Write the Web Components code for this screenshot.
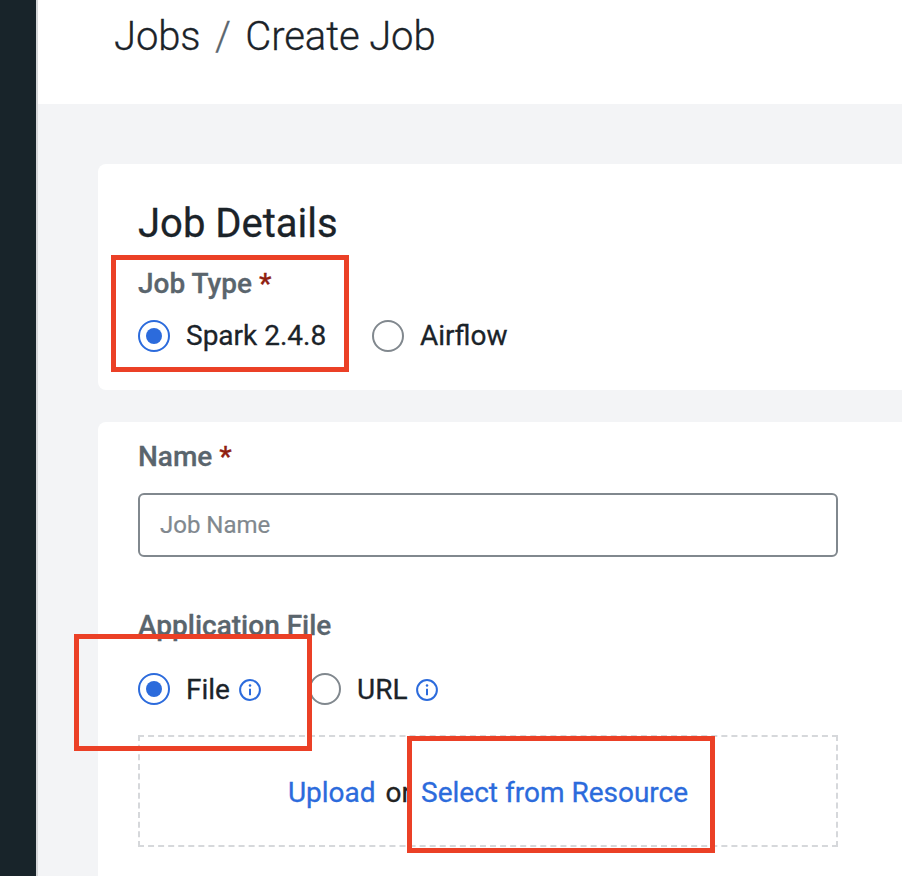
<!DOCTYPE html>
<html lang="en">
<head>
<meta charset="utf-8">
<title>Create Job</title>
<style>
html,body{margin:0;height:100%;overflow:hidden}
body{font-family:Roboto,"Liberation Sans",sans-serif;color:#1b2329;background:#f3f4f6;-webkit-text-stroke:.3px currentColor;
--blue:#2c6bdc;--grey:#5a656d;--line:#81888e;--required:#8f2011;--mark:#eb4026}
</style>
</head>
<body>
<job-page>
  <page-trail slot="header" parent="Jobs" current="Create Job"></page-trail>
  <form-card class="details" style="--h:226px;--pt:36px">
    <section-title>Job Details</section-title>
    <field-label required style="margin-top:20px">Job Type</field-label>
    <radio-row style="margin-top:20px;--gap:46px">
      <radio-option checked style="width:188px">Spark 2.4.8</radio-option>
      <radio-option>Airflow</radio-option>
    </radio-row>
  </form-card>
  <form-card style="--h:560px;--pt:19px">
    <field-label required>Name</field-label>
    <text-field placeholder="Job Name" style="margin-top:20px"></text-field>
    <field-label style="margin-top:53px">Application File</field-label>
    <radio-row style="margin-top:31px;--gap:48px;--drop:2px">
      <radio-option checked info style="width:123px">File</radio-option>
      <radio-option info style="--info-gap:8px">URL</radio-option>
    </radio-row>
    <drop-zone style="margin-top:30px"></drop-zone>
  </form-card>
  <mark-box slot="marks" style="left:111px;top:255px;width:238px;height:117px"></mark-box>
  <mark-box slot="marks" style="left:74px;top:634px;width:238px;height:117px"></mark-box>
  <mark-box slot="marks" style="left:407px;top:736px;width:308px;height:117px"></mark-box>
</job-page>
<script>
function define(name, render) {
  customElements.define(name, class extends HTMLElement {
    constructor() {
      super();
      this.attachShadow({ mode: 'open' });
    }
    connectedCallback() {
      this.shadowRoot.innerHTML = render(this);
    }
  });
}

define('job-page', () => `
<style>
:host{display:grid;grid-template-columns:36px 1fr;height:100vh;overflow:hidden;position:relative}
aside{background:#18242a}
main{border-left:2px solid #d5d7d9;min-width:0;display:flex;flex-direction:column}
header{background:#fff;height:104px;flex:none;box-sizing:border-box;padding:13px 0 0 76px}
.body{display:flex;flex-direction:column;gap:32px;padding:60px 0 0 60px}
</style>
<aside></aside><main><header><slot name="header"></slot></header><div class="body"><slot></slot></div></main>
<slot name="marks"></slot>`);

define('page-trail', el => `
<style>
:host{display:flex;gap:14.5px;font-size:40px;line-height:48px;font-weight:300;letter-spacing:-.1px;white-space:nowrap}
i{font-style:normal;color:var(--grey)}
</style>
<span>${el.getAttribute('parent')}</span><i>/</i><span>${el.getAttribute('current')}</span>`);

define('form-card', () => `
<style>
:host{display:flex;flex-direction:column;flex:none;box-sizing:border-box;height:var(--h);padding:var(--pt) 64px 0 40px;background:#fff;border-radius:8px 0 0 8px}
</style><slot></slot>`);

define('section-title', () => `
<style>:host{display:block;font-size:40px;line-height:48px}</style><slot></slot>`);

define('field-label', el => `
<style>
:host{display:block;font-size:28px;line-height:32px;font-weight:500;color:var(--grey);white-space:nowrap;-webkit-text-stroke:.3px var(--grey)}
b{font-weight:500;color:var(--required);-webkit-text-stroke:.3px var(--required)}
</style><slot></slot>${el.hasAttribute('required') ? ' <b>*</b>' : ''}`);

define('radio-row', () => `
<style>:host{display:flex;gap:var(--gap)}</style><slot></slot>`);

define('radio-option', el => `
<style>
:host{display:flex;align-items:center;height:32px;font-size:28px;line-height:32px;white-space:nowrap}
.ring{width:32px;height:32px;flex:none;margin-right:16px}
span{padding-top:var(--drop,0)}
.info{width:22px;height:22px;flex:none;margin:2px 0 0 var(--info-gap,9px)}
</style>
<svg class="ring" viewBox="0 0 32 32">${el.hasAttribute('checked')
  ? '<circle cx="16" cy="16" r="15" fill="#fff" stroke="#2c6bdc" stroke-width="2"/><circle cx="16" cy="16" r="8" fill="#2c6bdc"/>'
  : '<circle cx="16" cy="16" r="15" fill="#fff" stroke="#81888e" stroke-width="2"/>'}</svg>
<span><slot></slot></span>
${el.hasAttribute('info') ? '<svg class="info" viewBox="0 0 22 22"><circle cx="11" cy="11" r="9.9" fill="none" stroke="#2c6bdc" stroke-width="2"/><path d="M11 9.7V16.2" stroke="#2c6bdc" stroke-width="2"/><circle cx="11" cy="6.6" r="1.25" fill="#2c6bdc"/></svg>' : ''}`);

define('text-field', el => `
<style>
:host{display:block}
input{display:block;box-sizing:border-box;width:100%;height:64px;border:2px solid var(--line);border-radius:6px;padding:0 20px;font:24px Roboto,sans-serif;background:#fff;outline:none}
input::placeholder{color:var(--line);opacity:1;-webkit-text-stroke:.2px var(--line)}
</style><input placeholder="${el.getAttribute('placeholder')}">`);

define('drop-zone', () => `
<style>
:host{display:flex;justify-content:center;align-items:center;gap:10px;box-sizing:border-box;height:112px;padding-top:4px;border:2px dashed #d6d8db;font-size:28px;line-height:32px;color:#222;white-space:nowrap}
a{color:var(--blue);-webkit-text-stroke:.3px var(--blue)}
</style><a>Upload</a><span>or</span><a>Select from Resource</a>`);

define('mark-box', () => `
<style>:host{display:block;position:absolute;box-sizing:border-box;border:5px solid var(--mark)}</style>`);
</script>
</body>
</html>
